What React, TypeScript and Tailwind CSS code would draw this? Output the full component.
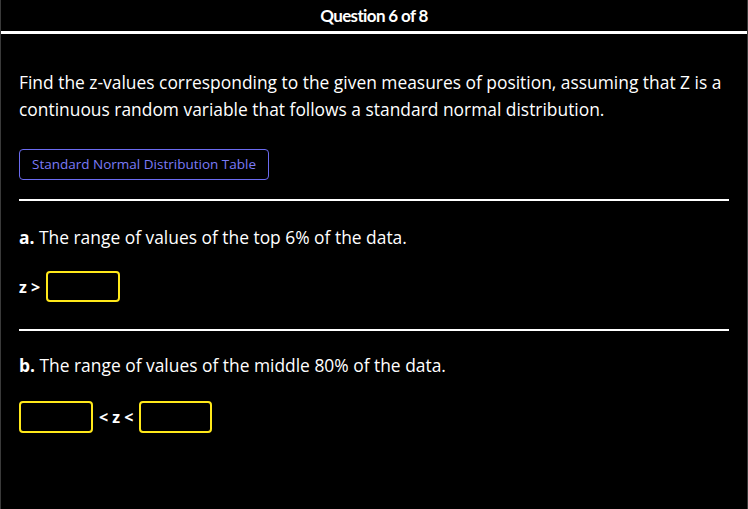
export default function App() {
  return (
    <div className="w-[748px] h-[509px] bg-black text-white border-x border-[#3a3a3a] overflow-hidden" style={{ fontFamily: '"Open Sans", "Noto Sans", sans-serif' }}>
      {/* Header */}
      <div className="h-[31px] pt-[1px] flex items-center justify-center">
        <span className="text-[17px] font-bold tracking-[-0.65px]" style={{ fontFamily: 'Lato, sans-serif' }}>Question 6 of 8</span>
      </div>
      <div className="h-[3px] bg-white" />

      <div className="px-[18px]">
        <p className="mt-[35px] text-[17.4px] leading-[27px]">
          Find the z-values corresponding to the given measures of position, assuming that Z is a continuous random variable that follows a standard normal distribution.
        </p>

        <button className="mt-[26px] h-[31px] px-[12px] border border-[#6b6bf0] rounded-[4px] text-[13.5px] text-[#7b7bf7]">
          Standard Normal Distribution Table
        </button>

        <div className="mt-[19px] h-[2px] bg-white" />

        {/* Part a */}
        <p className="mt-[23px] text-[17.4px] leading-[27px]">
          <span className="font-bold">a.</span> The range of values of the top 6% of the data.
        </p>
        <div className="mt-[20px] flex items-center gap-[6px]">
          <span className="text-[16px] font-bold">z &gt;</span>
          <div className="w-[74px] h-[31px] border-2 border-[#ffe81a] rounded-[4px]" />
        </div>

        <div className="mt-[27px] h-[2px] bg-white" />

        {/* Part b */}
        <p className="mt-[21px] text-[17.4px] leading-[27px]">
          <span className="font-bold">b.</span> The range of values of the middle 80% of the data.
        </p>
        <div className="mt-[22px] flex items-center gap-[6px]">
          <div className="w-[74px] h-[32px] border-2 border-[#ffe81a] rounded-[4px]" />
          <span className="text-[16px] font-bold">&lt; z &lt;</span>
          <div className="w-[73px] h-[32px] border-2 border-[#ffe81a] rounded-[4px]" />
        </div>
      </div>
    </div>
  );
}
